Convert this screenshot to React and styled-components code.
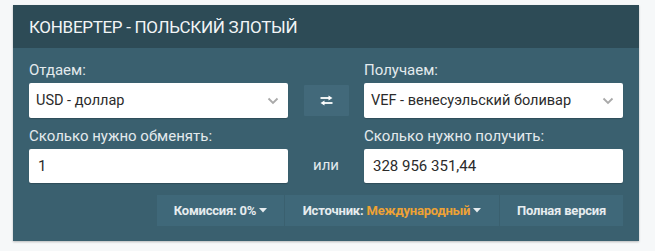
import styled, { createGlobalStyle } from "styled-components";

const GlobalStyle = createGlobalStyle`
  body {
    margin: 0;
    background: #f6f8f9;
    font-family: Roboto, "Liberation Sans", sans-serif;
  }
`;

const Page = styled.div`
  padding: 5px 16px 8px 13px;
`;

const Panel = styled.div`
  width: 626px;
  background: #3a606f;
  box-shadow: 0 1px 2px rgba(0, 0, 0, 0.25);
`;

const Header = styled.div`
  height: 43px;
  display: flex;
  align-items: center;
  padding: 0 16px;
  background: #2d4b56;
  color: #f2f5f6;
  font-size: 17px;
  letter-spacing: -0.3px;
  text-transform: uppercase;
`;

const Body = styled.div`
  padding: 14px 16px 15px;
`;

const Grid = styled.div`
  display: grid;
  grid-template-columns: 259px 76px 259px;
  row-gap: 10px;
`;

const Field = styled.div`
  display: flex;
  flex-direction: column;
  gap: 4px;
`;

const Label = styled.div`
  font-size: 15px;
  line-height: 17px;
  color: #e3eaed;
`;

const Box = styled.div`
  height: ${(p) => (p.$input ? 34 : 35)}px;
  display: flex;
  align-items: center;
  justify-content: space-between;
  padding: 0 9px 0 ${(p) => (p.$input ? 9 : 7)}px;
  background: #fff;
  border-radius: 2px;
  box-shadow: 0 1px 1px rgba(0, 0, 0, 0.2);
  color: #2b2b2b;
  font-size: ${(p) => (p.$input ? 15 : 14.5)}px;
`;

const Middle = styled.div`
  display: flex;
  align-items: flex-end;
  justify-content: center;
  padding-bottom: ${(p) => p.$pad}px;
`;

const Swap = styled.div`
  width: 45px;
  height: 31px;
  display: flex;
  align-items: center;
  justify-content: center;
  background: #42697a;
  border-radius: 1px;
`;

const Or = styled.div`
  color: #e3eaed;
  font-size: 15px;
`;

const Bar = styled.div`
  display: flex;
  justify-content: flex-end;
  gap: 1px;
  margin-top: 12px;
`;

const BarButton = styled.div`
  width: ${(p) => p.$w}px;
  height: 31px;
  display: flex;
  align-items: center;
  justify-content: center;
  gap: 3px;
  background: #3f6879;
  color: #e6ecef;
  font-size: 13px;
  font-weight: 700;
  letter-spacing: -0.2px;
`;

const Accent = styled.span`
  color: #eea235;
`;

const Chevron = () => (
  <svg width="12" height="8" viewBox="0 0 12 8">
    <path d="M1.5 1.5 L6 6 L10.5 1.5" fill="none" stroke="#a9a9a9" strokeWidth="1.8" />
  </svg>
);

const Caret = () => (
  <svg width="8" height="5" viewBox="0 0 8 5">
    <path d="M0 0 H8 L4 4.5 Z" fill="#e6ecef" />
  </svg>
);

const SwapIcon = () => (
  <svg width="13" height="11" viewBox="0 0 13 11">
    <path d="M0.5 3 H10" stroke="#fff" strokeWidth="1.8" />
    <path d="M8.5 0.5 L12.5 3 L8.5 5.5 Z" fill="#fff" />
    <path d="M3 8 H12.5" stroke="#fff" strokeWidth="1.8" />
    <path d="M4.5 5.5 L0.5 8 L4.5 10.5 Z" fill="#fff" />
  </svg>
);

export default function App() {
  return (
    <>
      <GlobalStyle />
      <Page>
        <Panel>
          <Header>Конвертер - Польский злотый</Header>
          <Body>
            <Grid>
              <Field>
                <Label>Отдаем:</Label>
                <Box>
                  <span>USD - доллар</span>
                  <Chevron />
                </Box>
              </Field>
              <Middle $pad={2}>
                <Swap>
                  <SwapIcon />
                </Swap>
              </Middle>
              <Field>
                <Label>Получаем:</Label>
                <Box>
                  <span>VEF - венесуэльский боливар</span>
                  <Chevron />
                </Box>
              </Field>
              <Field>
                <Label>Сколько нужно обменять:</Label>
                <Box $input>
                  <span>1</span>
                </Box>
              </Field>
              <Middle $pad={9}>
                <Or>или</Or>
              </Middle>
              <Field>
                <Label>Сколько нужно получить:</Label>
                <Box $input>
                  <span>328 956 351,44</span>
                </Box>
              </Field>
            </Grid>
            <Bar>
              <BarButton $w={127}>
                Комиссия: 0% <Caret />
              </BarButton>
              <BarButton $w={214}>
                <span>
                  Источник: <Accent>Международный</Accent>
                </span>
                <Caret />
              </BarButton>
              <BarButton $w={123}>Полная версия</BarButton>
            </Bar>
          </Body>
        </Panel>
      </Page>
    </>
  );
}
